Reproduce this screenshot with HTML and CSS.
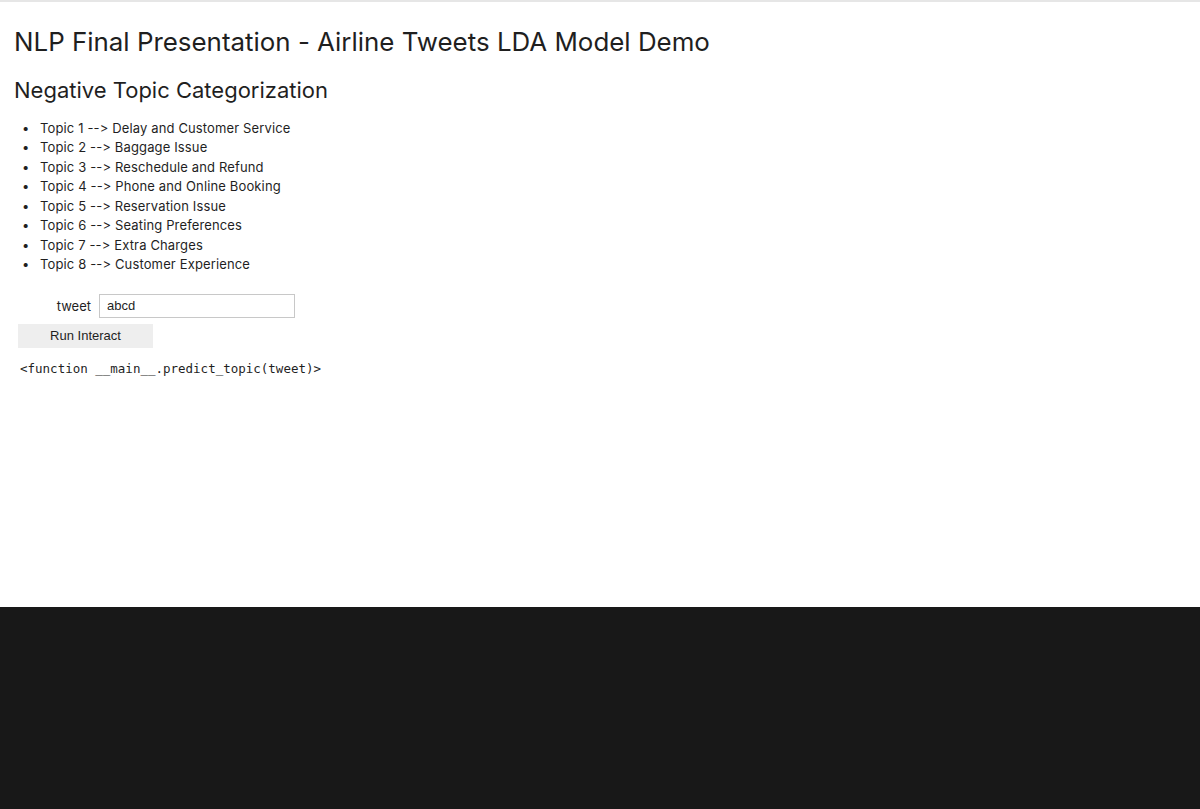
FILE: index.html
```html
<!DOCTYPE html>
<html>
<head>
<meta charset="utf-8">
<link rel="stylesheet" href="styles.css">
</head>
<body>
<div class="page">
  <div class="content">
    <h1 class="title">NLP Final Presentation - Airline Tweets LDA Model Demo</h1>
    <h2 class="subtitle">Negative Topic Categorization</h2>
    <ul class="topics">
      <li>Topic 1 --&gt; Delay and Customer Service</li>
      <li>Topic 2 --&gt; Baggage Issue</li>
      <li>Topic 3 --&gt; Reschedule and Refund</li>
      <li>Topic 4 --&gt; Phone and Online Booking</li>
      <li>Topic 5 --&gt; Reservation Issue</li>
      <li>Topic 6 --&gt; Seating Preferences</li>
      <li>Topic 7 --&gt; Extra Charges</li>
      <li>Topic 8 --&gt; Customer Experience</li>
    </ul>
    <div class="widget">
      <div class="field">
        <label class="label">tweet</label>
        <input class="input" type="text" value="abcd">
      </div>
      <button class="btn">Run Interact</button>
      <pre class="output">&lt;function __main__.predict_topic(tweet)&gt;</pre>
    </div>
  </div>
  <div class="footer"></div>
</div>
</body>
</html>
```
FILE: styles.css
```css
html, body {
  margin: 0;
  padding: 0;
  background: #ffffff;
}
.page {
  display: flex;
  flex-direction: column;
  height: 809px;
  border-top: 2px solid #e6e6e6;
  box-sizing: border-box;
}
.content {
  height: 605px;
  padding: 0 14px;
  font-family: Inter, "Liberation Sans", Arial, sans-serif;
  font-variant-ligatures: none;
  font-feature-settings: "calt" 0, "liga" 0;
  color: #1f1f1f;
}
.footer {
  flex: 1;
  background: #181818;
}
.title {
  margin: 25px 0 0;
  font-size: 25.9px;
  font-weight: 400;
  line-height: 30px;
}
.subtitle {
  margin: 20px 0 0;
  font-size: 22px;
  font-weight: 400;
  line-height: 26px;
}
.topics {
  margin: 16px 0 0;
  padding-left: 8px;
  list-style: none;
  font-size: 13px;
  line-height: 19.45px;
  letter-spacing: 0.14px;
}
.topics li {
  display: flex;
}
.topics li::before {
  content: "\2022";
  width: 18px;
  flex: none;
  font-size: 13px;
}
.widget {
  margin-top: 19px;
  padding-left: 4px;
}
.field {
  display: flex;
  align-items: center;
  gap: 8px;
}
.label {
  width: 73px;
  text-align: right;
  font-size: 13px;
}
.input {
  width: 196px;
  height: 24px;
  box-sizing: border-box;
  border: 1px solid #c8c8c8;
  padding: 0 7px;
  font-family: "Liberation Sans", Arial, sans-serif;
  font-size: 13px;
  color: #1f1f1f;
  margin: 0;
}
.btn {
  display: block;
  margin-top: 6px;
  width: 135px;
  height: 24px;
  border: none;
  background: #eeeeee;
  font-family: "Liberation Sans", Arial, sans-serif;
  font-size: 13px;
  color: #1f1f1f;
  padding: 0;
}
.output {
  margin: 13px 0 0 2px;
  font-family: "DejaVu Sans Mono", monospace;
  font-size: 12.5px;
  line-height: 16px;
  color: #1f1f1f;
}
```
